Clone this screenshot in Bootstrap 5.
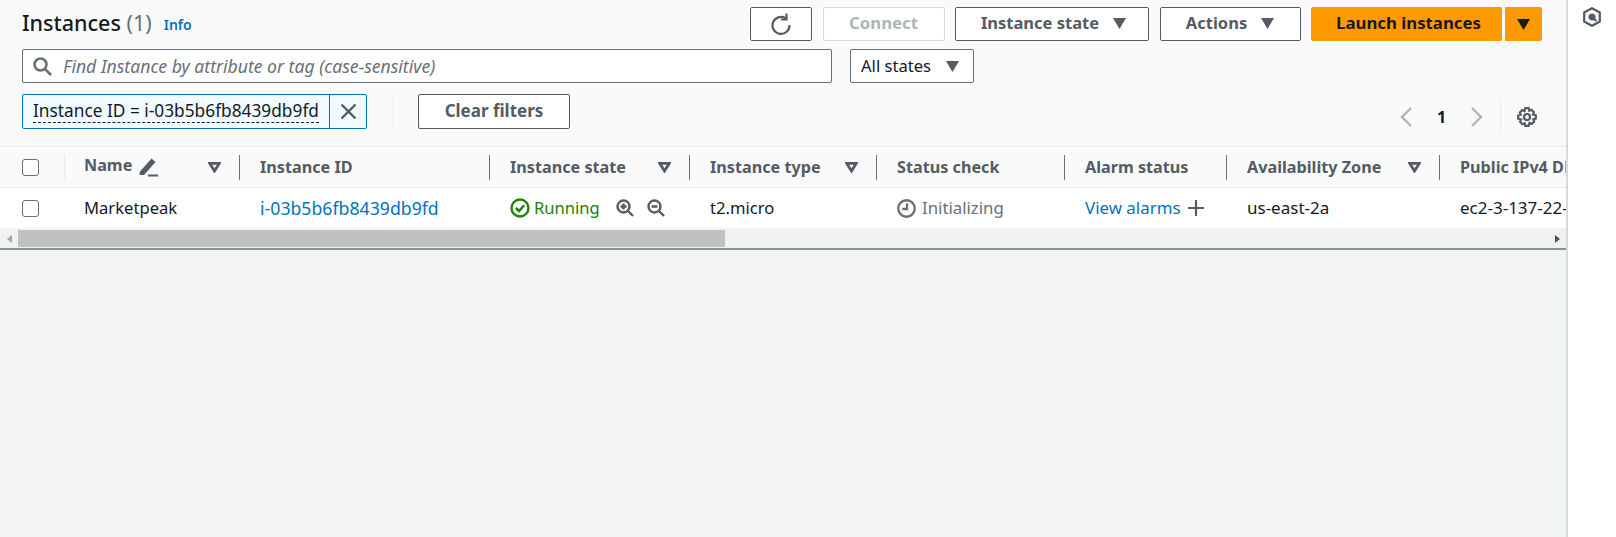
<!DOCTYPE html>
<html lang="en">
<head>
    <meta charset="UTF-8">
    <meta name="viewport" content="width=device-width, initial-scale=1.0">
    <title>Instances</title>
    <link href="https://cdn.jsdelivr.net/npm/bootstrap@5.3.3/dist/css/bootstrap.min.css" rel="stylesheet">
    <style>
        html, body { height: 100%; }
        body { font-family: "Noto Sans", "Open Sans", sans-serif; font-size: 16.6px; color: #16191f; background: #f2f3f3; overflow: hidden; }
        .page-main { width: 1566px; flex: none; overflow: hidden; }
        .side-rail { flex: 1; background: #fff; border-left: 2px solid #d5dbdb; padding: 7px 0 0 15px; }
        .top-panel { background: #fafafa; height: 147px; padding: 7px 24px 0 22px; border-bottom: 1px solid #eaeded; }
        .title-row { height: 34px; }
        .page-title { font-size: 21.5px; font-weight: 500; line-height: 30px; margin: 0 0 2px; }
        .page-title span { color: #687078; font-weight: 400; }
        .info-link { font-size: 14px; font-weight: 600; color: #0073bb; text-decoration: none; margin-left: 12px; }
        .aws-btn { height: 34px; border: 1px solid #545b64; border-radius: 2px; background: #fff; color: #545b64; font-weight: 700; font-size: 16.8px; padding: 0 0 2px; display: flex; align-items: center; justify-content: center; gap: 14px; }
        .aws-btn:disabled { opacity: 1; border-color: #d5dbdb; color: #aab7b8; }
        .btn-refresh { width: 62px; padding: 0; }
        .btn-connect { width: 122px; }
        .btn-state { width: 194px; font-size: 16.5px; padding-left: 3px; }
        .btn-actions { width: 141px; font-size: 16.5px; }
        .btn-launch { width: 191px; padding-left: 4px; background: #ff9900; border-color: #ff9900; color: #16191f; border-radius: 2px 0 0 2px; }
        .btn-launch-caret { width: 37px; margin-left: 3px; padding: 0; background: #ff9900; border-color: #ff9900; color: #16191f; border-radius: 0 2px 2px 0; }
        .btn-clear { width: 152px; height: 35px; margin-left: -1px; font-size: 17px; }
        .caret-down { width: 13px; height: 11px; flex: none; }
        .search-box { width: 810px; height: 34px; background: #fff; border: 1px solid #687078; border-radius: 2px; padding-left: 10px; gap: 11px; }
        .search-box span { font-style: italic; color: #687078; font-size: 17.6px; }
        .state-select { width: 124px; height: 34px; margin-left: 18px; background: #fff; border: 1px solid #687078; border-radius: 2px; padding: 0 14px 0 10px; }
        .filter-row { height: 35px; margin-top: 11px; }
        .filter-token { width: 345px; height: 35px; background: #f1faff; border: 1px solid #0073bb; border-radius: 2px; }
        .filter-token .token-text { flex: 1; padding-left: 10px; border-right: 1px solid #0073bb; line-height: 32px; white-space: nowrap; font-size: 17.3px; }
        .filter-token .token-text span { border-bottom: 1px dashed #16191f; }
        .filter-token .token-close { width: 36px; text-align: center; }
        .v-rule { width: 1px; height: 35px; background: #eaeded; margin: 0 25px 0 26px; }
        .pager { margin-right: 5px; margin-top: 5px; }
        .pager-num { width: 59px; text-align: center; font-weight: 700; font-size: 16px; }
        .pager-rule { width: 1px; height: 35px; background: #eaeded; margin: 0 16px 0 17px; }
        .table-clip { overflow: hidden; height: 81px; }
        .inst-table { table-layout: fixed; width: 1800px; margin: 0; border-collapse: separate; border-spacing: 0; }
        .inst-table th, .inst-table td { padding: 0; height: 41px; vertical-align: middle; font-size: 16.6px; white-space: nowrap; border-bottom: 1px solid #eaeded; }
        .inst-table th { background: #fafafa; color: #545b64; font-weight: 700; font-size: 16.2px; }
        .inst-table td { background: #fff; height: 40px; border-bottom: 0; color: #16191f; }
        .th-in { height: 25px; padding: 0 18px 0 20px; border-right: 1px solid #687078; display: flex; align-items: center; justify-content: space-between; }
        .th-first { border-right-color: #eaeded; padding: 0 0 0 22px; }
        .name-label { margin-bottom: 4px; margin-left: -1px; }
        .td-in { padding-left: 20px; display: flex; align-items: center; }
        .td-first { padding-left: 22px; }
        .td-name { margin-left: -1px; }
        .td-zone { font-size: 17px; }
        .fake-check { width: 17px; height: 17px; background: #fff; border: 1px solid #687078; border-radius: 3px; display: block; }
        .table-link { color: #0073bb; text-decoration: none; }
        .id-text { font-size: 17.7px; }
        .state-run { color: #1d8102; }
        .state-init { color: #687078; font-size: 16.8px; }
        .sort-mark { width: 13px; height: 11px; flex: none; }
        .h-scroll { height: 22px; background: #f1f1f1; border-bottom: 2px solid #879596; padding: 2px 0 1px; }
        .h-scroll-thumb { width: 707px; background: #c1c1c1; }
        .h-scroll-arrow { width: 18px; }
    </style>
</head>
<body>
    <div class="d-flex h-100">
        <div class="page-main">
            <!-- Header with title, actions and filters -->
            <div class="top-panel">
                <div class="title-row d-flex align-items-center">
                    <h1 class="page-title">Instances <span>(1)</span></h1>
                    <a href="#" class="info-link">Info</a>
                    <div class="ms-auto d-flex" style="gap:10.5px">
                        <button class="aws-btn btn-refresh" aria-label="Refresh">
                            <svg width="20" height="23" viewBox="0 0 20 23" fill="none" stroke="#545b64" stroke-width="2.2"><path d="M14.5 5.2A8.5 8.5 0 1 0 18.5 12"/><path d="M15.5 0.5V6.5H10"/></svg>
                        </button>
                        <button class="aws-btn btn-connect" disabled>Connect</button>
                        <button class="aws-btn btn-state">Instance state <svg class="caret-down" viewBox="0 0 13 11"><path d="M0 0H13L6.5 11Z" fill="#545b64"/></svg></button>
                        <button class="aws-btn btn-actions">Actions <svg class="caret-down" viewBox="0 0 13 11"><path d="M0 0H13L6.5 11Z" fill="#545b64"/></svg></button>
                        <div class="d-flex">
                            <button class="aws-btn btn-launch">Launch instances</button>
                            <button class="aws-btn btn-launch-caret" aria-label="More"><svg class="caret-down" viewBox="0 0 13 11"><path d="M0 0H13L6.5 11Z" fill="#16191f"/></svg></button>
                        </div>
                    </div>
                </div>
                <div class="d-flex mt-2">
                    <div class="search-box d-flex align-items-center">
                        <svg width="19" height="19" viewBox="0 0 19 19" fill="none" stroke="#687078" stroke-width="2.6"><circle cx="7.5" cy="7.5" r="6"/><path d="M12 12L18 18"/></svg>
                        <span>Find Instance by attribute or tag (case-sensitive)</span>
                    </div>
                    <div class="state-select d-flex align-items-center justify-content-between">
                        All states
                        <svg class="caret-down" viewBox="0 0 13 11"><path d="M0 0H13L6.5 11Z" fill="#545b64"/></svg>
                    </div>
                </div>
                <div class="filter-row d-flex align-items-start">
                    <div class="filter-token d-flex">
                        <div class="token-text"><span>Instance ID = i-03b5b6fb8439db9fd</span></div>
                        <div class="token-close d-flex align-items-center justify-content-center">
                            <svg width="17" height="17" viewBox="0 0 17 17" stroke="#545b64" stroke-width="2.4"><path d="M1.5 1.5L15.5 15.5M15.5 1.5L1.5 15.5"/></svg>
                        </div>
                    </div>
                    <div class="v-rule"></div>
                    <button class="aws-btn btn-clear">Clear filters</button>
                    <div class="pager ms-auto d-flex align-items-center">
                        <svg width="12" height="20" viewBox="0 0 12 20" fill="none" stroke="#aab7b8" stroke-width="2.4"><path d="M11 1L2 10L11 19"/></svg>
                        <div class="pager-num">1</div>
                        <svg width="12" height="20" viewBox="0 0 12 20" fill="none" stroke="#aab7b8" stroke-width="2.4"><path d="M1 1L10 10L1 19"/></svg>
                        <div class="pager-rule"></div>
                        <svg width="20" height="20" viewBox="0 0 20 20" fill="none" stroke="#545b64" stroke-width="2.2"><circle cx="10" cy="10" r="3"/><path d="M8.3 1.2H11.7L12.3 3.7 14.5 2.8 17 5.3 15.9 7.5 18.8 8.3V11.7L16.3 12.3 17.2 14.5 14.7 17 12.5 15.9 11.7 18.8H8.3L7.7 16.3 5.5 17.2 3 14.7 4.1 12.5 1.2 11.7V8.3L3.7 7.7 2.8 5.5 5.3 3 7.5 4.1Z"/></svg>
                    </div>
                </div>
            </div>

            <!-- Instances table -->
            <div class="table-clip">
                <table class="inst-table">
                    <colgroup>
                        <col style="width:65px"><col style="width:175px"><col style="width:250px"><col style="width:200px"><col style="width:187px"><col style="width:188px"><col style="width:162px"><col style="width:213px"><col style="width:360px">
                    </colgroup>
                    <thead>
                        <tr>
                            <th><div class="th-in th-first"><span class="fake-check"></span></div></th>
                            <th><div class="th-in"><span class="d-flex align-items-center" style="gap:5px"><span class="name-label">Name</span> <svg width="22" height="22" viewBox="0 0 22 22"><path d="M3 15.5L14.5 2.5L18.5 6L7 19H2.5Z" fill="#545b64"/><path d="M11 19.5H21" stroke="#545b64" stroke-width="2"/></svg></span><svg class="sort-mark" viewBox="0 0 13 11" fill="none" stroke="#545b64" stroke-width="2.8"><path d="M1.8 1.4H11.2L6.5 9Z"/></svg></div></th>
                            <th><div class="th-in">Instance ID</div></th>
                            <th><div class="th-in">Instance state<svg class="sort-mark" viewBox="0 0 13 11" fill="none" stroke="#545b64" stroke-width="2.8"><path d="M1.8 1.4H11.2L6.5 9Z"/></svg></div></th>
                            <th><div class="th-in">Instance type<svg class="sort-mark" viewBox="0 0 13 11" fill="none" stroke="#545b64" stroke-width="2.8"><path d="M1.8 1.4H11.2L6.5 9Z"/></svg></div></th>
                            <th><div class="th-in">Status check</div></th>
                            <th><div class="th-in">Alarm status</div></th>
                            <th><div class="th-in">Availability Zone<svg class="sort-mark" viewBox="0 0 13 11" fill="none" stroke="#545b64" stroke-width="2.8"><path d="M1.8 1.4H11.2L6.5 9Z"/></svg></div></th>
                            <th><div class="th-in">Public IPv4 DNS</div></th>
                        </tr>
                    </thead>
                    <tbody>
                        <tr>
                            <td><div class="td-in td-first"><span class="fake-check"></span></div></td>
                            <td><div class="td-in"><span class="td-name">Marketpeak</span></div></td>
                            <td><div class="td-in"><a href="#" class="table-link id-text">i-03b5b6fb8439db9fd</a></div></td>
                            <td><div class="td-in">
                                <svg width="20" height="20" viewBox="0 0 20 20" fill="none" stroke="#1d8102" stroke-width="2.4"><circle cx="10" cy="10" r="8.5"/><path d="M5.8 10L9 13L14.2 7.2"/></svg>
                                <span class="state-run ms-1">Running</span>
                                <svg class="ms-3" width="18" height="18" viewBox="0 0 18 18" fill="none" stroke="#545b64" stroke-width="2.4"><circle cx="7.5" cy="7.5" r="6"/><path d="M12 12L17 17M4.5 7.5H10.5M7.5 4.5V10.5"/></svg>
                                <svg width="18" height="18" viewBox="0 0 18 18" fill="none" stroke="#545b64" stroke-width="2.4" style="margin-left:13px"><circle cx="7.5" cy="7.5" r="6"/><path d="M12 12L17 17M4.5 7.5H10.5"/></svg>
                            </div></td>
                            <td><div class="td-in">t2.micro</div></td>
                            <td><div class="td-in">
                                <svg width="19" height="19" viewBox="0 0 18 18" fill="none" stroke="#687078" stroke-width="2.2"><circle cx="9" cy="9" r="7.8"/><path d="M9.5 4V9.5H5"/></svg>
                                <span class="state-init" style="margin-left:6px">Initializing</span>
                            </div></td>
                            <td><div class="td-in"><a href="#" class="table-link" style="font-size:16.9px">View alarms</a>
                                <svg width="18" height="18" viewBox="0 0 18 18" stroke="#545b64" stroke-width="2.2" style="margin-left:6px"><path d="M1 9H17M9 1V17"/></svg>
                            </div></td>
                            <td><div class="td-in td-zone">us-east-2a</div></td>
                            <td><div class="td-in td-zone">ec2-3-137-22-108.us-east-2.compute.amazonaws.com</div></td>
                        </tr>
                    </tbody>
                </table>
            </div>
            <div class="h-scroll d-flex">
                <div class="h-scroll-arrow d-flex align-items-center justify-content-center"><svg width="5" height="8" viewBox="0 0 5 8"><path d="M5 0V8L0 4Z" fill="#a3a3a3"/></svg></div>
                <div class="h-scroll-thumb"></div>
                <div class="h-scroll-arrow ms-auto d-flex align-items-center justify-content-center"><svg width="5" height="8" viewBox="0 0 5 8"><path d="M0 0V8L5 4Z" fill="#505050"/></svg></div>
            </div>
        </div>
        <div class="side-rail">
            <svg class="d-block" width="18" height="20" viewBox="0 0 18 20" fill="none" stroke="#545b64" stroke-width="2.2"><path d="M9 1.2L16.8 5.5V14.5L9 18.8L1.2 14.5V5.5Z"/><circle cx="9" cy="10" r="2.5" fill="#545b64"/><path d="M10 11L13.5 14"/></svg>
        </div>
    </div>
</body>
</html>
